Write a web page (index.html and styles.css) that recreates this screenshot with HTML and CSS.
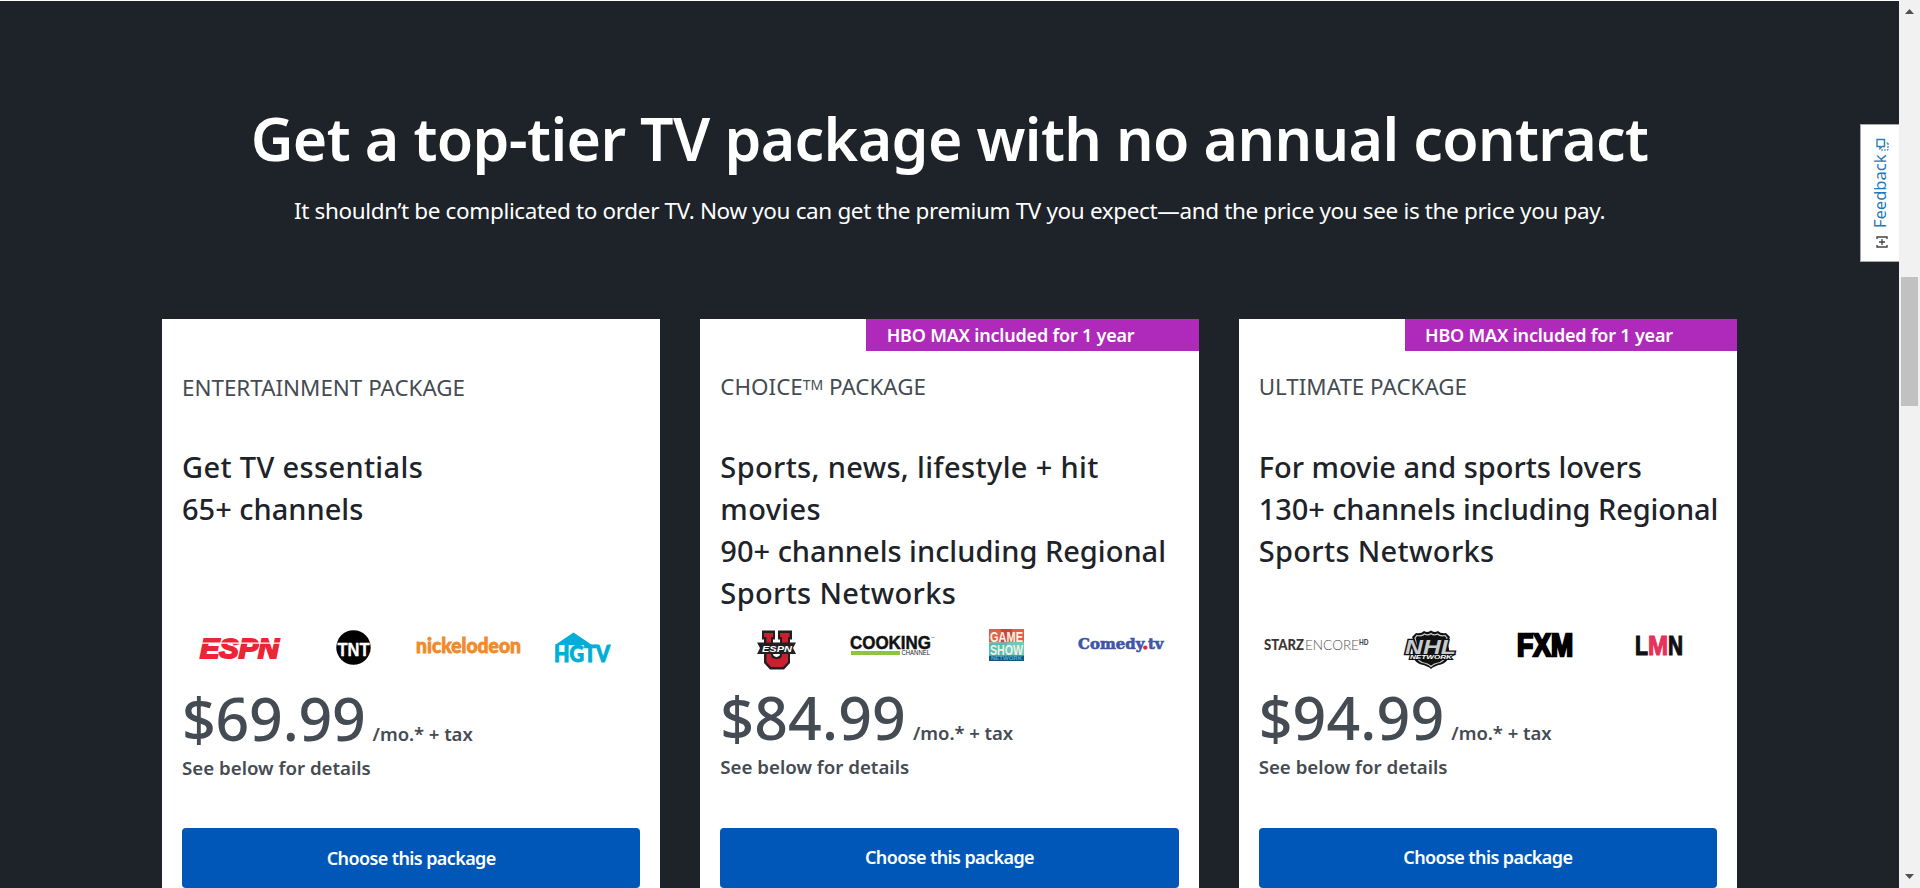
FILE: index.html
```html
<!DOCTYPE html>
<html lang="en">
<head>
<meta charset="utf-8">
<title>TV packages</title>
<link rel="stylesheet" href="styles.css">
</head>
<body>
<div class="window">
  <main class="page">
    <h1 class="title">Get a top-tier TV package with no annual contract</h1>
    <p class="subtitle">It shouldn’t be complicated to order TV. Now you can get the premium TV you expect—and the price you see is the price you pay.</p>
    <section class="cards">
      <article class="card card--plain">
        <div class="ribbon-row"></div>
        <h2 class="name name--ent">ENTERTAINMENT PACKAGE</h2>
        <p class="headline"><span class="loose">Get TV essentials</span><br>65+ channels</p>
        <div class="logos">
          <svg class="logo logo--espn" width="82" height="44" viewBox="0 0 82 44">
            <text x="1" y="30.500" font-family="Liberation Sans" font-weight="700" font-style="italic" font-size="28.500" fill="#ed2436" stroke="#ed2436" stroke-width="2" textLength="79" lengthAdjust="spacingAndGlyphs">ESPN</text>
            <path d="M1 16.200H81" stroke="#fff" stroke-width="1.200"/>
          </svg>
          <svg class="logo logo--tnt" width="35" height="44" viewBox="0 0 35 44">
            <circle cx="17.500" cy="20.500" r="17.200" fill="#000"/>
            <text x="1.500" y="28.600" font-family="Liberation Sans" font-weight="700" font-size="18.500" fill="#fff" stroke="#fff" stroke-width=".4" textLength="32" lengthAdjust="spacingAndGlyphs">TNT</text>
          </svg>
          <svg class="logo logo--nick" width="106" height="44" viewBox="0 0 106 44">
            <text x="0" y="26" font-family="Lato" font-weight="900" font-size="20.500" fill="#f08b2c" stroke="#f08b2c" stroke-width=".8" textLength="105" lengthAdjust="spacingAndGlyphs">nickelodeon</text>
          </svg>
          <svg class="logo logo--hgtv" width="56" height="44" viewBox="0 0 56 44">
            <path d="M0 18 18.500 5.500 37 18Z" fill="#00aed6"/>
            <text x="-1" y="34.500" font-family="Lato" font-weight="900" font-size="22" fill="#00aed6" stroke="#00aed6" stroke-width="1" textLength="56" lengthAdjust="spacingAndGlyphs">HGTV</text>
          </svg>
        </div>
        <p class="price"><span class="amount">$69.99</span><span class="per">/mo.* + tax</span></p>
        <p class="details">See below for details</p>
        <a class="choose">Choose this package</a>
      </article>

      <article class="card">
        <div class="ribbon-row"><span class="ribbon">HBO MAX included for 1 year</span></div>
        <h2 class="name name--choice">CHOICE<span class="tm">TM</span> PACKAGE</h2>
        <p class="headline"><span class="loose">Sports, news, lifestyle + hit movies</span><br>90+ channels including Regional <span class="loose">Sports Networks</span></p>
        <div class="logos">
          <svg class="logo logo--espnu" width="40" height="44" viewBox="0 0 40 44">
            <path d="M5 3.500H18V12.500H16V27Q16 29.500 19.500 29.500T23 27V12.500H21V3.500H35V12.500H33V36L27 42.500H13L7 36V12.500H5Z" fill="#231f20"/>
            <path d="M7 6H16V10H14V28Q14 32 19.500 32T25 28V10H23V6H32.500V10H31V35L26 40H14L9.500 35V10H7Z" fill="#c8202f"/>
            <path d="M17.500 27V28Q17.500 30 19.500 30T21.500 28V27Z" fill="#fff"/>
            <path d="M0 15.500H39L36 21 39 27H0L3 21Z" fill="#231f20"/>
            <text x="5" y="24.500" font-family="Liberation Sans" font-weight="700" font-style="italic" font-size="9" fill="#fff" textLength="30" lengthAdjust="spacingAndGlyphs">ESPN</text>
          </svg>
          <svg class="logo logo--cook" width="86" height="44" viewBox="0 0 86 44">
            <text x="0" y="22" font-family="Liberation Sans" font-weight="700" font-size="19" fill="#111" stroke="#111" stroke-width=".5" textLength="81" lengthAdjust="spacingAndGlyphs">COOKING</text>
            <rect x="1" y="24" width="49" height="4" fill="#8cc63f"/>
            <text x="51.500" y="28.400" font-family="Liberation Sans" font-size="6.300" fill="#222" textLength="28.500" lengthAdjust="spacingAndGlyphs">CHANNEL</text>
            <text x="81" y="10.500" font-family="Liberation Sans" font-size="2.500" fill="#222">TM</text>
          </svg>
          <svg class="logo logo--gsn" width="35" height="44" viewBox="0 0 35 44">
            <rect y="2" width="35" height="13.500" fill="#df5f4d"/>
            <rect x="12" y="2" width="11" height="13.500" fill="#c9453f"/>
            <rect y="15.500" width="35" height="13" fill="#55bdb8"/>
            <rect x="18" y="15.500" width="17" height="13" fill="#6ccac5"/>
            <rect y="28.500" width="35" height="5.500" fill="#15577f"/>
            <text x="1" y="14.500" font-family="Liberation Sans" font-weight="700" font-size="15.500" fill="#fff3e0" textLength="33" lengthAdjust="spacingAndGlyphs">GAME</text>
            <text x="1" y="27.500" font-family="Liberation Sans" font-weight="700" font-size="15.500" fill="#f4f1dc" textLength="33" lengthAdjust="spacingAndGlyphs">SHOW</text>
            <text x="2" y="33" font-family="Liberation Sans" font-weight="700" font-size="5" fill="#51aebd" textLength="31" lengthAdjust="spacingAndGlyphs">NETWORK</text>
          </svg>
          <svg class="logo logo--comedy" width="86" height="44" viewBox="0 0 86 44">
            <text x="0" y="22" font-family="DejaVu Serif" font-weight="700" font-size="14.500" fill="#3f56a7" stroke="#3f56a7" stroke-width=".6" textLength="85.500" lengthAdjust="spacingAndGlyphs">Comedy<tspan fill="#ed2436" stroke="#ed2436" stroke-width="1.500">.</tspan>tv</text>
          </svg>
        </div>
        <p class="price"><span class="amount amount--loose">$84.99</span><span class="per">/mo.* + tax</span></p>
        <p class="details">See below for details</p>
        <a class="choose">Choose this package</a>
      </article>

      <article class="card">
        <div class="ribbon-row"><span class="ribbon ribbon--ult">HBO MAX included for 1 year</span></div>
        <h2 class="name name--ult">ULTIMATE PACKAGE</h2>
        <p class="headline headline--ult">For movie and sports lovers<br><span class="tight">130+ channels including Regional</span> <span class="loose">Sports Networks</span></p>
        <div class="logos">
          <svg class="logo logo--starz" width="105" height="44" viewBox="0 0 105 44">
            <text x="0" y="23" font-family="Lato" font-weight="900" font-size="14.500" fill="#3c3633" textLength="40" lengthAdjust="spacingAndGlyphs">STARZ</text>
            <text x="41" y="23" font-family="Lato" font-weight="300" font-size="14.500" fill="#555" textLength="54" lengthAdjust="spacingAndGlyphs">ENCORE</text>
            <text x="95" y="17.500" font-family="Lato" font-weight="900" font-size="6.500" fill="#444" textLength="9.500" lengthAdjust="spacingAndGlyphs">HD</text>
          </svg>
          <svg class="logo logo--nhl" width="54" height="44" viewBox="0 0 54 44">
            <path d="M12 6Q17 7 20 4 24 6 27 3.500 30 6 34 4 37 7 42 6L46 10Q43 15 45 22 47 34 37 37.500 30 39 27 42 24 39 17 37.500 7 34 9 22 11 15 8 10Z" fill="#111"/>
            <path d="M13 8.500Q18 9.500 20.500 7 24 9 27 6.500 30 9 33.500 7 36 9.500 41 8.500L43 11Q41 16 42.500 23 43 32 36 35.500 30 36.500 27 39.500 24 36.500 18 35.500 11 32 11.500 23 13 16 11 11Z" fill="#111" stroke="#ccc" stroke-width="1.200"/>
            <text x="1" y="26.500" font-family="Liberation Sans" font-weight="700" font-style="italic" font-size="20" fill="#c7cace" stroke="#111" stroke-width="2.500" paint-order="stroke" textLength="51" lengthAdjust="spacingAndGlyphs">NHL</text>
            <text x="6" y="32" font-family="Liberation Sans" font-weight="700" font-style="italic" font-size="5.500" fill="#fff" stroke="#111" stroke-width="2" paint-order="stroke" textLength="42" lengthAdjust="spacingAndGlyphs">NETWORK</text>
          </svg>
          <svg class="logo logo--fxm" width="56" height="44" viewBox="0 0 56 44">
            <text x="-1" y="29" font-family="Liberation Sans" font-weight="700" font-size="31" fill="#000" stroke="#000" stroke-width="2.400" textLength="56" lengthAdjust="spacingAndGlyphs">FXM</text>
          </svg>
          <svg class="logo logo--lmn" width="46" height="44" viewBox="0 0 46 44">
            <g font-family="Liberation Sans" font-weight="700" font-size="27" stroke-width="1.200">
              <text x="-1" y="27.500" fill="#111" stroke="#111" textLength="13" lengthAdjust="spacingAndGlyphs">L</text>
              <text x="32" y="27.500" fill="#111" stroke="#111" textLength="15" lengthAdjust="spacingAndGlyphs">N</text>
              <text x="12" y="27.500" fill="#e8305c" stroke="#e8305c" textLength="20" lengthAdjust="spacingAndGlyphs">M</text>
            </g>
          </svg>
        </div>
        <p class="price"><span class="amount amount--loose">$94.99</span><span class="per">/mo.* + tax</span></p>
        <p class="details">See below for details</p>
        <a class="choose">Choose this package</a>
      </article>
    </section>
    <aside class="feedback">
      <svg width="13" height="13" viewBox="0 0 13 13" fill="none">
        <path d="M1 1.500H8.500V8.500H6L4 10.500V8.500H1Z" stroke="#2a80bd" stroke-width="1.400"/>
        <path d="M10.500 5H12M12 5V12M5 12H12" stroke="#2a80bd" stroke-width="1.200" stroke-dasharray="2 1"/>
      </svg>
      <span class="feedback-text">Feedback</span>
      <svg width="12" height="12" viewBox="0 0 12 12" fill="none" stroke="#444">
        <path d="M3 1H1V11H3M9 1H11V11H9" transform="rotate(90 6 6)" stroke-width="1.400"/>
        <path d="M6 3V9M3 6H9" stroke-width="1.300"/>
      </svg>
    </aside>
  </main>
  <div class="scrollbar">
    <svg width="9" height="5" viewBox="0 0 9 5"><path d="M0 5 4.500 0 9 5Z" fill="#505050"/></svg>
    <span class="thumb"></span>
    <svg class="down" width="9" height="5" viewBox="0 0 9 5"><path d="M0 0 4.500 5 9 0Z" fill="#505050"/></svg>
  </div>
</div>
</body>
</html>
```
FILE: styles.css
```css
* { box-sizing: border-box; }
body, h1, h2, p { margin: 0; }
body { font-family: "Noto Sans", sans-serif; color: #1d2329; overflow: hidden; }
.window { display: flex; width: 1920px; height: 888px; overflow: hidden; }
.page { position: relative; width: 1899px; height: 888px; padding: 101px 162px 0; background: #1e2329; border-top: 1px solid #fff; overflow: hidden; }
.title { font-size: 59px; line-height: 72px; font-weight: 600; letter-spacing: -0.62px; color: #fff; text-align: center; white-space: nowrap; }
.subtitle { margin-top: 21px; font-size: 22.5px; line-height: 32px; letter-spacing: -0.36px; color: #fff; text-align: center; white-space: nowrap; }
.cards { display: grid; grid-template-columns: repeat(3, 1fr); gap: 40px; margin-top: 92px; }
.card { height: 580px; padding: 0 20px; background: #fff; display: flex; flex-direction: column; }
.ribbon-row { height: 32px; margin-right: -20px; display: flex; justify-content: flex-end; }
.ribbon { width: 333px; height: 32px; padding-left: 21px; background: #af29bb; color: #fff; font-size: 18px; line-height: 32px; font-weight: 600; letter-spacing: -0.2px; white-space: nowrap; }
.ribbon--ult { width: 332px; padding-left: 20px; }
.name { margin-top: 21px; height: 30px; font-size: 22.4px; line-height: 30px; font-weight: 400; color: #454b52; white-space: nowrap; }
.card--plain .name { margin-top: 22px; margin-bottom: -1px; }
.tm { font-size: 14px; line-height: 1; vertical-align: 5px; }
.headline { margin-top: 44px; height: 168px; font-size: 29px; line-height: 42px; font-weight: 500; }
.headline--ult { margin-right: -8px; }
.loose { letter-spacing: 0.35px; }
.tight { letter-spacing: -0.08px; }
.logos { display: flex; margin-top: 13px; height: 44px; }
.logo { flex: none; display: block; overflow: visible; }
.logo--espn { margin-left: 17px; }
.logo--tnt { margin-left: 55px; }
.logo--nick { margin-left: 44.5px; }
.logo--hgtv { margin-left: 33px; }
.logo--espnu { margin-left: 37px; }
.logo--cook { margin-left: 53px; }
.logo--gsn { margin-left: 53px; }
.logo--comedy { margin-left: 54px; }
.logo--starz { margin-left: 5px; }
.logo--nhl { margin-left: 35px; }
.logo--fxm { margin-left: 60px; }
.logo--lmn { margin-left: 62px; }
.price { margin-top: 11px; height: 70px; line-height: 70px; color: #454b52; white-space: nowrap; }
.card--plain .price { margin-top: 12px; }
.amount { font-size: 59px; font-weight: 500; letter-spacing: -0.2px; }
.amount--loose { letter-spacing: 0.15px; }
.per { margin-left: 7px; font-size: 18.5px; font-weight: 600; letter-spacing: -0.05px; }
.details { margin-top: 2px; font-size: 18.7px; line-height: 26px; font-weight: 600; color: #454b52; }
.choose { margin-top: 48px; height: 60px; border-radius: 4px; background: #0057b8; color: #fff; font-size: 18px; line-height: 59px; font-weight: 600; letter-spacing: -0.6px; text-align: center; }
.card--plain .choose { margin-top: 47px; line-height: 61px; }
.feedback { position: absolute; right: 0; top: 123px; width: 39px; height: 138px; background: #fff; border: 1px solid #a8a8a8; border-right: 0; display: flex; flex-direction: column; align-items: center; padding: 13px 0 0 4px; }
.feedback-text { margin: 3px 4px 8px 0; height: 74px; width: 18px; writing-mode: vertical-rl; transform: rotate(180deg); font-size: 16.5px; line-height: 18px; color: #1f79b8; white-space: nowrap; }
.scrollbar { width: 21px; height: 888px; background: #f1f1f1; display: flex; flex-direction: column; align-items: center; padding-top: 9px; }
.thumb { width: 17px; height: 129px; margin-top: 263px; background: #c1c1c1; }
.down { margin-top: 468px; }
```
